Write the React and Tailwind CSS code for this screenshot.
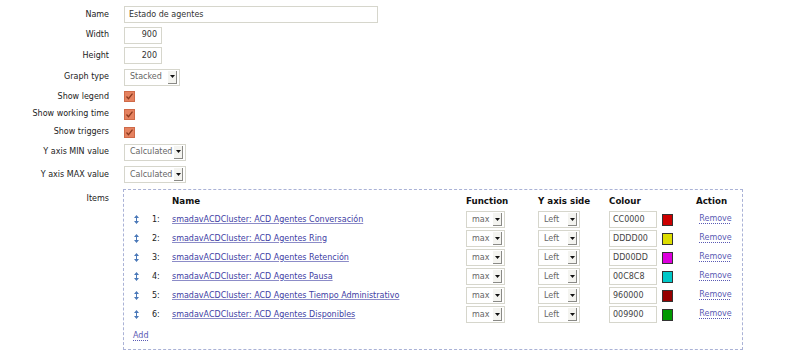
import React from 'react';

const font = { fontFamily: '"DejaVu Sans", Verdana, sans-serif' };

const items = [
    { n: 1, name: 'smadavACDCluster: ACD Agentes Conversación', color: 'CC0000', hex: '#cc0000' },
    { n: 2, name: 'smadavACDCluster: ACD Agentes Ring', color: 'DDDD00', hex: '#dddd00' },
    { n: 3, name: 'smadavACDCluster: ACD Agentes Retención', color: 'DD00DD', hex: '#dd00dd' },
    { n: 4, name: 'smadavACDCluster: ACD Agentes Pausa', color: '00C8C8', hex: '#00c8c8' },
    { n: 5, name: 'smadavACDCluster: ACD Agentes Tiempo Administrativo', color: '960000', hex: '#960000' },
    { n: 6, name: 'smadavACDCluster: ACD Agentes Disponibles', color: '009900', hex: '#009900' },
];

const Select = ({ value, w }) => (
    <div className={`${w} h-[17px] flex items-center border border-[#d6d6cc] bg-white`}>
        <span className='flex-1 pl-[5px] text-[8px] text-[#666]'>{value}</span>
        <span className='w-[9px] h-[13px] mr-[2px] flex items-center justify-center bg-[#f4f4f0] border-r border-b border-[#8a8a86]'>
            <svg width="5" height="3" viewBox="0 0 5 3"><path d="M0 0h5L2.5 3z" fill="#111" /></svg>
        </span>
    </div>
);

const Check = () => (
    <svg width="11" height="11" viewBox="0 0 11 11">
        <rect x="0.5" y="0.5" width="10" height="10" fill="#e58260" stroke="#cf6a48" />
        <path d="M2.5 5.5l2 2.2 4-5" fill="none" stroke="#8c3a1e" strokeWidth="1.3" />
    </svg>
);

const Row = ({ label, h, children }) => (
    <div className={`flex items-center ${h}`}>
        <div className='w-[109px] text-right text-[8px] text-[#222]'>{label}</div>
        <div className='ml-[15px] flex items-center'>{children}</div>
    </div>
);

const DragIcon = () => (
    <svg width="5" height="9" viewBox="0 0 5 9">
        <path d="M2.5 0L5 3H0z M2.5 9L0 6h5z" fill="#4a78b8" />
        <rect x="2" y="2.5" width="1" height="4" fill="#4a78b8" />
    </svg>
);

const cols = 'grid grid-cols-[24px_24px_294px_72px_71px_87px_1fr] items-center';

export default function App() {
    return (
        <div className='w-[800px] h-[359px] bg-white overflow-hidden pt-[4px]' style={font}>
            <Row label="Name" h="h-[21px]">
                <div className='w-[254px] h-[17px] border border-[#d6d6cc] flex items-center pl-[4px] text-[8px] text-[#333]'>Estado de agentes</div>
            </Row>
            <Row label="Width" h="h-[20px]">
                <div className='w-[38px] h-[17px] border border-[#d6d6cc] flex items-center justify-end pr-[4px] text-[8px] text-[#333]'>900</div>
            </Row>
            <Row label="Height" h="h-[21px]">
                <div className='w-[38px] h-[17px] border border-[#d6d6cc] flex items-center justify-end pr-[4px] text-[8px] text-[#333]'>200</div>
            </Row>
            <Row label="Graph type" h="h-[22px]">
                <Select value="Stacked" w="w-[56px]" />
            </Row>
            <Row label="Show legend" h="h-[17px]">
                <Check />
            </Row>
            <Row label="Show working time" h="h-[18px]">
                <Check />
            </Row>
            <Row label="Show triggers" h="h-[18px]">
                <Check />
            </Row>
            <Row label="Y axis MIN value" h="h-[22px]">
                <Select value="Calculated" w="w-[62px]" />
            </Row>
            <Row label="Y axis MAX value" h="h-[23px]">
                <Select value="Calculated" w="w-[62px]" />
            </Row>
            <div className='flex mt-[3px]'>
                <div className='w-[109px] text-right text-[8px] text-[#222] pt-[4px]'>Items</div>
                <div className='ml-[14px] w-[620px] border border-dashed border-[#aab2d6] pb-[5px]'>
                    <div className={`${cols} h-[20px] pt-[4px] text-[8.7px] font-bold text-[#111]`}>
                        <span></span>
                        <span></span>
                        <span>Name</span>
                        <span>Function</span>
                        <span>Y axis side</span>
                        <span>Colour</span>
                        <span>Action</span>
                    </div>
                    {items.map((it) => (
                        <div key={it.n} className={`${cols} h-[19px] text-[8px]`}>
                            <span className='flex justify-center pl-[1px]'><DragIcon /></span>
                            <span className='pl-[4px] text-[#222]'>{it.n}:</span>
                            <span className='text-[#4040a4] underline decoration-[#8c8cc8]'>{it.name}</span>
                            <span><Select value="max" w="w-[39px]" /></span>
                            <span><Select value="Left" w="w-[42px]" /></span>
                            <span className='flex items-center'>
                                <span className='w-[48px] h-[17px] border border-[#d6d6cc] flex items-center pl-[3px] text-[#444]'>{it.color}</span>
                                <span className='ml-[5px] w-[11px] h-[12px] border border-[#333]' style={{ backgroundColor: it.hex }}></span>
                            </span>
                            <span className='text-[#5a5ab4] underline decoration-dotted decoration-[#5a5ab4] underline-offset-2 w-[39px] text-center -mt-[1px]'>Remove</span>
                        </div>
                    ))}
                    <div className='h-[20px] pt-[3px] flex items-center pl-[9px] text-[8px]'>
                        <span className='text-[#5a5ab4] underline decoration-dotted underline-offset-2'>Add</span>
                    </div>
                </div>
            </div>
        </div>
    );
}
